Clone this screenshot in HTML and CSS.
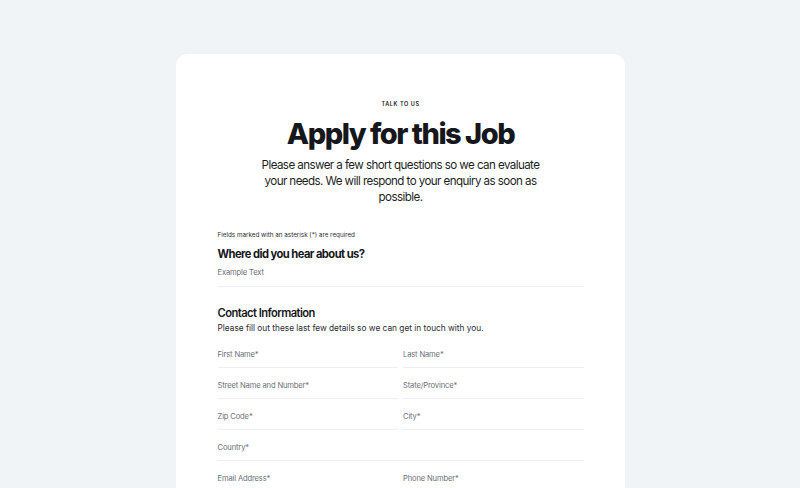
FILE: index.html
```html
<!DOCTYPE html>
<html>
<head>
<meta charset="utf-8">
<link rel="stylesheet" href="styles.css">
</head>
<body>
<div class="page">
  <div class="card">
    <div class="eyebrow">TALK TO US</div>
    <h1 class="title">Apply for this Job</h1>
    <p class="intro">Please answer a few short questions so we can evaluate your needs. We will respond to your enquiry as soon as possible.</p>
    <form class="form">
      <div class="note">Fields marked with an asterisk (*) are required</div>
      <h2 class="q">Where did you hear about us?</h2>
      <div class="field single"><span class="ph">Example Text</span></div>
      <h3 class="section">Contact Information</h3>
      <div class="subnote">Please fill out these last few details so we can get in touch with you.</div>
      <div class="grid">
        <div class="field"><span class="ph">First Name*</span></div>
        <div class="field"><span class="ph">Last Name*</span></div>
        <div class="field"><span class="ph">Street Name and Number*</span></div>
        <div class="field"><span class="ph">State/Province*</span></div>
        <div class="field"><span class="ph">Zip Code*</span></div>
        <div class="field"><span class="ph">City*</span></div>
        <div class="field full"><span class="ph">Country*</span></div>
        <div class="field"><span class="ph">Email Address*</span></div>
        <div class="field"><span class="ph">Phone Number*</span></div>
      </div>
    </form>
  </div>
</div>
</body>
</html>
```
FILE: styles.css
```css
* { box-sizing: border-box; }
html, body { margin: 0; padding: 0; }
body {
  background: #f1f4f7;
  font-family: Inter, "Noto Sans", sans-serif;
  color: #16171c;
  height: 488px;
  overflow: hidden;
}
.page {
  display: flex;
  justify-content: center;
  padding-top: 54px;
}
.card {
  width: 449px;
  background: #ffffff;
  border-radius: 12px;
  padding: 46px 41px 40px 42px;
  display: flex;
  flex-direction: column;
  align-items: center;
}
.eyebrow {
  font-size: 5.5px;
  font-weight: 600;
  letter-spacing: 0.6px;
  line-height: 8px;
}
.title {
  margin: 9px 0 0;
  font-size: 29px;
  font-weight: 800;
  letter-spacing: -1.5px;
  line-height: 34px;
}
.intro {
  margin: 6px 0 0;
  width: 290px;
  text-align: center;
  font-size: 11.6px;
  letter-spacing: -0.05em;
  line-height: 16px;
  font-weight: 400;
  color: #1e1f24;
}
.form {
  width: 100%;
  margin-top: 25px;
}
.note {
  font-size: 6.3px;
  line-height: 10px;
  color: #2b2c31;
}
.q {
  margin: 6px 0 0;
  font-size: 11.2px;
  font-weight: 700;
  letter-spacing: -0.05em;
  line-height: 16px;
}
.field {
  height: 31px;
  padding-top: 12px;
  border-bottom: 1.5px solid #eceef1;
}
.field.single {
  height: 25px;
  padding-top: 5px;
}
.ph {
  display: block;
  font-size: 7.6px;
  letter-spacing: -0.15px;
  color: #6c6f78;
  line-height: 12px;
}
.section {
  margin: 18px 0 0;
  font-size: 11.2px;
  font-weight: 600;
  letter-spacing: -0.05em;
  line-height: 16px;
}
.subnote {
  margin-top: 1px;
  font-size: 8.3px;
  line-height: 12px;
  color: #2b2c31;
}
.grid {
  display: grid;
  grid-template-columns: 1fr 1fr;
  column-gap: 5px;
  margin-top: 3px;
}
.full { grid-column: 1 / span 2; }
```
